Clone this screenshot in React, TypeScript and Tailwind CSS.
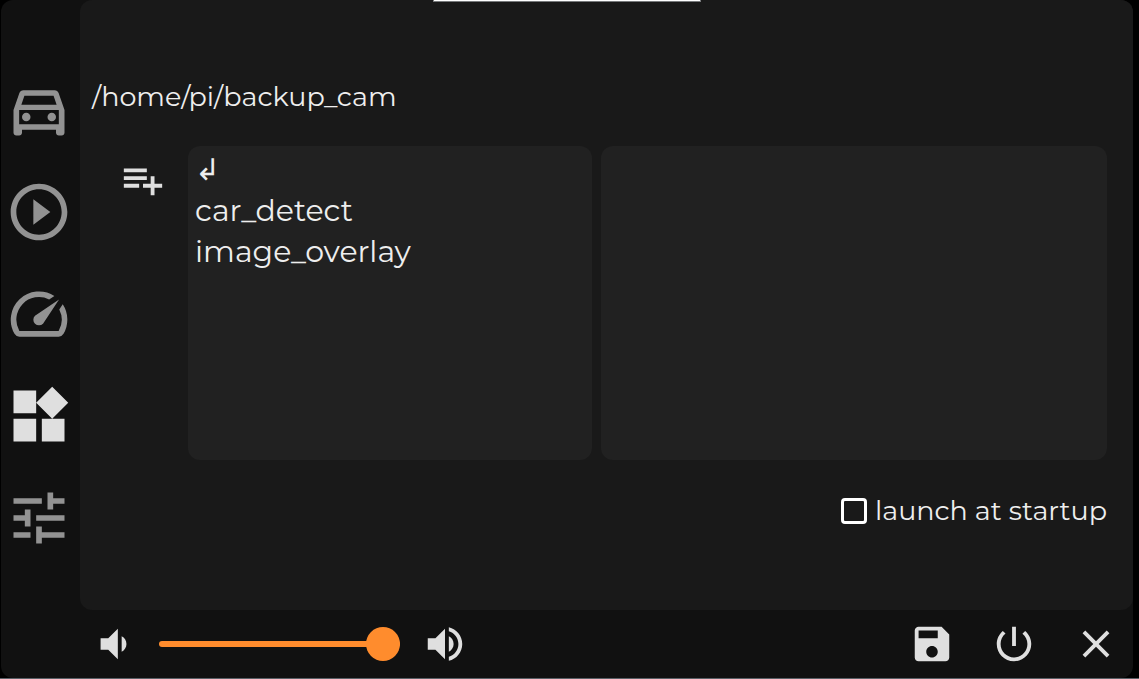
import { useState } from "react";
import type { CSSProperties, ReactNode } from "react";

type IconProps = { d: string; className?: string; children?: ReactNode };

function Icon({ d, className, children }: IconProps) {
  return (
    <svg viewBox="0 0 24 24" fill="currentColor" aria-hidden="true" className={className}>
      <path d={d} />
      {children}
    </svg>
  );
}

const paths = {
  car: "M18.92 6.01C18.72 5.42 18.16 5 17.5 5h-11c-.66 0-1.21.42-1.42 1.01L3 12v8c0 .55.45 1 1 1h1c.55 0 1-.45 1-1v-1h12v1c0 .55.45 1 1 1h1c.55 0 1-.45 1-1v-8l-2.08-5.99zM6.85 7h10.29l1.08 3.11H5.77L6.85 7zM19 17H5v-5h14v5z",
  play: "M10 16.5l6-4.5-6-4.5v9zM12 2C6.48 2 2 6.48 2 12s4.48 10 10 10 10-4.48 10-10S17.52 2 12 2zm0 18c-4.41 0-8-3.59-8-8s3.59-8 8-8 8 3.59 8 8-3.59 8-8 8z",
  speed:
    "M20.38 8.57l-1.23 1.85a8 8 0 0 1-.22 7.58H5.07A8 8 0 0 1 15.58 6.85l1.85-1.23A10 10 0 0 0 3.35 19a2 2 0 0 0 1.72 1h13.85a2 2 0 0 0 1.74-1 10 10 0 0 0-.27-10.44zM10.59 15.41a2 2 0 0 0 2.83 0l5.66-8.49-8.49 5.66a2 2 0 0 0 0 2.83z",
  widgets: "M13 13v8h8v-8h-8zM3 21h8v-8H3v8zM3 3v8h8V3H3zm13.66-1.31L11 7.34 16.66 13l5.66-5.66-5.66-5.65z",
  tune: "M3 17v2h6v-2H3zM3 5v2h10V5H3zm10 16v-2h8v-2h-8v-2h-2v6h2zM7 9v2H3v2h4v2h2V9H7zm14 4v-2H11v2h10zm-6-4h2V7h4V5h-4V3h-2v6z",
  playlistAdd: "M14 10H2v2h12v-2zm0-4H2v2h12V6zm4 8v-4h-2v4h-4v2h4v4h2v-4h4v-2h-4zM2 16h8v-2H2v2z",
  volumeDown: "M18.5 12c0-1.77-1.02-3.29-2.5-4.03v8.05c1.48-.73 2.5-2.25 2.5-4.02zM5 9v6h4l5 5V4L9 9H5z",
  volumeUp:
    "M3 9v6h4l5 5V4L7 9H3zm13.5 3c0-1.77-1.02-3.29-2.5-4.03v8.05c1.48-.73 2.5-2.25 2.5-4.02zM14 3.23v2.06c2.89.86 5 3.54 5 6.71s-2.11 5.85-5 6.71v2.06c4.01-.91 7-4.49 7-8.77s-2.99-7.86-7-8.77z",
  save: "M17 3H5c-1.11 0-2 .9-2 2v14c0 1.1.89 2 2 2h14c1.1 0 2-.9 2-2V7l-4-4zm-5 16c-1.66 0-3-1.34-3-3s1.34-3 3-3 3 1.34 3 3-1.34 3-3 3zm3-10H5V5h10v4z",
  power:
    "M13 3h-2v10h2V3zm4.83 2.17l-1.42 1.42C17.99 7.86 19 9.81 19 12c0 3.87-3.13 7-7 7s-7-3.13-7-7c0-2.19 1.01-4.14 2.58-5.42L6.17 5.17C4.23 6.82 3 9.26 3 12c0 4.97 4.03 9 9 9s9-4.03 9-9c0-2.74-1.23-5.18-3.17-6.83z",
  close: "M19 6.41L17.59 5 12 10.59 6.41 5 5 6.41 10.59 12 5 17.59 6.41 19 12 13.41 17.59 19 19 17.59 13.41 12z",
};

const pages = [
  { name: "Vehicle", d: paths.car },
  { name: "Media", d: paths.play },
  { name: "Dash", d: paths.speed },
  { name: "Launcher", d: paths.widgets },
  { name: "Settings", d: paths.tune },
];

const folders = ["car_detect", "image_overlay"];

function Sidebar() {
  const [active, setActive] = useState("Launcher");
  return (
    <nav aria-label="Pages" className="flex w-[79px] shrink-0 flex-col items-start gap-[34px] pt-[76px] pl-1">
      {pages.map((page) => (
        <button
          key={page.name}
          type="button"
          aria-label={page.name}
          onClick={() => setActive(page.name)}
          className={page.name === active ? "text-[#dfdfdf]" : "text-[#929292]"}
        >
          <Icon d={page.d} className="size-[68px]">
            {page.name === "Vehicle" && (
              <>
                <circle cx="7.5" cy="14.5" r="1.5" />
                <circle cx="16.5" cy="14.5" r="1.5" />
              </>
            )}
          </Icon>
        </button>
      ))}
    </nav>
  );
}

function Launcher() {
  return (
    <main className="relative flex grow flex-col rounded-xl bg-[#191919] pt-[76px] pr-[26px] pb-[76px] pl-3">
      <div className="absolute top-0 left-1/3 ml-0.5 h-0.5 w-[268px] border-x border-b border-[#77797b] bg-white" />
      <p className="text-[27px] leading-[42px]">/home/pi/backup_cam</p>
      <div className="mt-7 flex grow">
        <div className="w-24 shrink-0 pt-[11px] pl-7">
          <button type="button" aria-label="Add launcher" className="text-[#dfdfdf]">
            <Icon d={paths.playlistAdd} className="size-[46px]" />
          </button>
        </div>
        <div className="grid grow grid-cols-[4fr_5fr] gap-[9px]">
          <ul className="rounded-xl bg-[#212121] px-[7px] pt-[3px] text-[30px] leading-[41px]">
            <li>
              <button type="button" aria-label="Parent folder" className="block font-['DejaVu_Sans']">
                ↲
              </button>
            </li>
            {folders.map((folder) => (
              <li key={folder}>
                <button type="button" className="block">
                  {folder}
                </button>
              </li>
            ))}
          </ul>
          <div className="rounded-xl bg-[#212121]" />
        </div>
      </div>
      <label className="mt-[29px] mb-px flex items-center gap-2 self-end text-[27px] leading-[44px]">
        <input
          type="checkbox"
          className="size-[26px] appearance-none rounded border-3 border-white checked:bg-[#ff8c2d]"
        />
        launch at startup
      </label>
    </main>
  );
}

function Controls() {
  const [volume, setVolume] = useState(100);
  return (
    <footer className="flex h-[68px] shrink-0 items-center pr-3.5 pl-[90px] text-[#dfdfdf]">
      <button type="button" aria-label="Volume down" onClick={() => setVolume((v) => Math.max(0, v - 10))}>
        <Icon d={paths.volumeDown} className="size-[46px]" />
      </button>
      <input
        type="range"
        aria-label="Volume"
        min={0}
        max={100}
        value={volume}
        onChange={(e) => setVolume(Number(e.target.value))}
        style={{ "--fill": `${volume}%` } as CSSProperties}
        className="mx-[22px] h-[34px] w-[241px] appearance-none bg-transparent [&::-webkit-slider-runnable-track]:h-1.5 [&::-webkit-slider-runnable-track]:rounded-full [&::-webkit-slider-runnable-track]:bg-[linear-gradient(to_right,#ff8c2d_var(--fill),#3a3a3a_var(--fill))] [&::-webkit-slider-thumb]:-mt-3.5 [&::-webkit-slider-thumb]:size-[34px] [&::-webkit-slider-thumb]:appearance-none [&::-webkit-slider-thumb]:rounded-full [&::-webkit-slider-thumb]:bg-[#ff8c2d]"
      />
      <button type="button" aria-label="Volume up" onClick={() => setVolume((v) => Math.min(100, v + 10))}>
        <Icon d={paths.volumeUp} className="size-[46px]" />
      </button>
      <div className="ml-auto flex gap-9">
        <button type="button" aria-label="Save">
          <Icon d={paths.save} className="size-[46px]" />
        </button>
        <button type="button" aria-label="Power">
          <Icon d={paths.power} className="size-[46px]" />
        </button>
        <button type="button" aria-label="Close">
          <Icon d={paths.close} className="size-[46px]" />
        </button>
      </div>
    </footer>
  );
}

export default function App() {
  return (
    <div className="flex min-h-screen flex-col border-b border-[#5a6067] bg-black pr-1.5 pl-px font-['Montserrat','Inter',sans-serif] text-[#eeeeee]">
      <div className="flex grow flex-col rounded-xl bg-[#111111]">
        <div className="flex grow">
          <Sidebar />
          <Launcher />
        </div>
        <Controls />
      </div>
    </div>
  );
}
